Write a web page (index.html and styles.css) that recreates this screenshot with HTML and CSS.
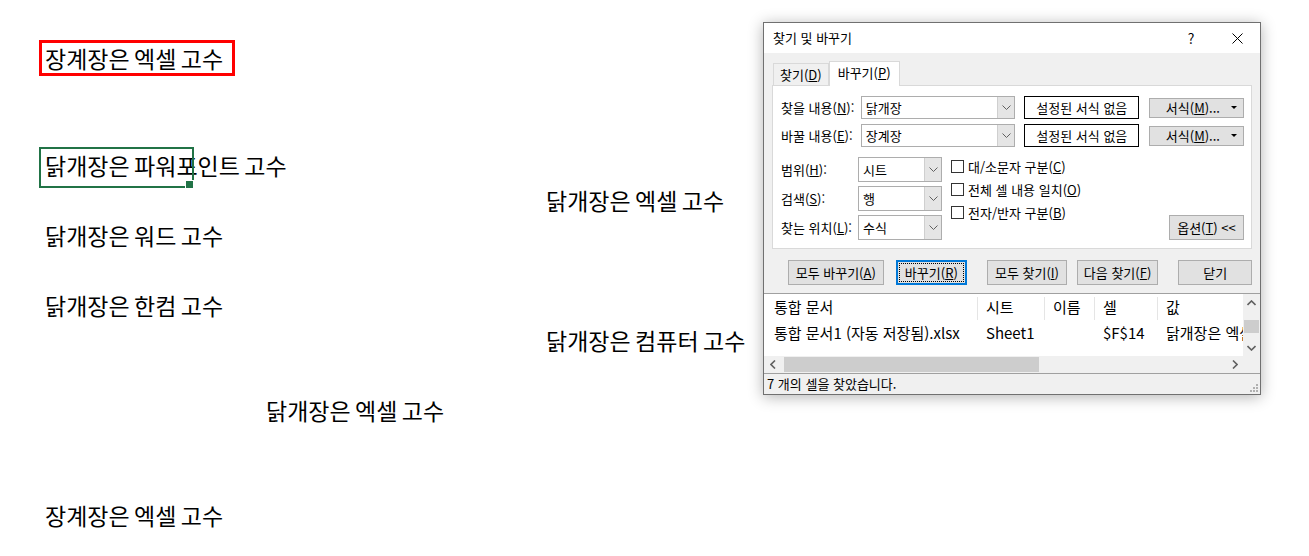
FILE: index.html
```html
<!DOCTYPE html>
<html lang="ko">
<head>
    <meta charset="UTF-8">
    <title>찾기 및 바꾸기</title>
    <link rel="stylesheet" href="styles.css">
</head>
<body>

    <div class="sheet">
        <div class="cell ca r1 cell-boxed"><div class="shape-box">장계장은 엑셀 고수</div></div>
        <div class="cell ca r4 selected">닭개장은 파워포인트 고수</div>
        <div class="cell ce r5">닭개장은 엑셀 고수</div>
        <div class="cell ca r6">닭개장은 워드 고수</div>
        <div class="cell ca r8">닭개장은 한컴 고수</div>
        <div class="cell ce r9">닭개장은 컴퓨터 고수</div>
        <div class="cell cc r11">닭개장은 엑셀 고수</div>
        <div class="cell ca r14">장계장은 엑셀 고수</div>
    </div>

    <div class="dialog">
        <div class="titlebar">
            <span class="title">찾기 및 바꾸기</span>
            <span class="title-btn help">?</span>
            <span class="title-btn">
                <svg width="11" height="11" viewBox="0 0 11 11"><path d="M0.5 0.5L10.5 10.5M10.5 0.5L0.5 10.5" stroke="#000" stroke-width="1" fill="none"/></svg>
            </span>
        </div>

        <div class="dlg-body">
            <div class="tabs">
                <div class="tab"><span>찾기(<u>D</u>)</span></div>
                <div class="tab active"><span>바꾸기(<u>P</u>)</span></div>
            </div>

            <div class="panel">
                <div class="field-row">
                    <label class="field-label">찾을 내용(<u>N</u>):</label>
                    <div class="combo wide">
                        <span class="combo-text">닭개장</span>
                        <span class="combo-btn"><svg width="9" height="5" viewBox="0 0 9 5"><path d="M0.5 0.5L4.5 4.5L8.5 0.5" stroke="#606060" fill="none"/></svg></span>
                    </div>
                    <div class="fmt-preview">설정된 서식 없음</div>
                    <button class="btn fmt-btn"><span>서식(<u>M</u>)...</span><span class="caret"></span></button>
                </div>
                <div class="field-row">
                    <label class="field-label">바꿀 내용(<u>E</u>):</label>
                    <div class="combo wide">
                        <span class="combo-text">장계장</span>
                        <span class="combo-btn"><svg width="9" height="5" viewBox="0 0 9 5"><path d="M0.5 0.5L4.5 4.5L8.5 0.5" stroke="#606060" fill="none"/></svg></span>
                    </div>
                    <div class="fmt-preview">설정된 서식 없음</div>
                    <button class="btn fmt-btn"><span>서식(<u>M</u>)...</span><span class="caret"></span></button>
                </div>

                <div class="options">
                    <div class="opt-fields">
                        <div class="opt-row">
                            <label class="opt-label">범위(<u>H</u>):</label>
                            <div class="combo narrow">
                                <span class="combo-text">시트</span>
                                <span class="combo-btn"><svg width="9" height="5" viewBox="0 0 9 5"><path d="M0.5 0.5L4.5 4.5L8.5 0.5" stroke="#606060" fill="none"/></svg></span>
                            </div>
                        </div>
                        <div class="opt-row">
                            <label class="opt-label">검색(<u>S</u>):</label>
                            <div class="combo narrow">
                                <span class="combo-text">행</span>
                                <span class="combo-btn"><svg width="9" height="5" viewBox="0 0 9 5"><path d="M0.5 0.5L4.5 4.5L8.5 0.5" stroke="#606060" fill="none"/></svg></span>
                            </div>
                        </div>
                        <div class="opt-row">
                            <label class="opt-label">찾는 위치(<u>L</u>):</label>
                            <div class="combo narrow">
                                <span class="combo-text">수식</span>
                                <span class="combo-btn"><svg width="9" height="5" viewBox="0 0 9 5"><path d="M0.5 0.5L4.5 4.5L8.5 0.5" stroke="#606060" fill="none"/></svg></span>
                            </div>
                        </div>
                    </div>

                    <div class="checks">
                        <label class="check"><span class="box"></span><span>대/소문자 구분(<u>C</u>)</span></label>
                        <label class="check"><span class="box"></span><span>전체 셀 내용 일치(<u>O</u>)</span></label>
                        <label class="check"><span class="box"></span><span>전자/반자 구분(<u>B</u>)</span></label>
                    </div>

                    <button class="btn options-btn">옵션(<u>T</u>) &lt;&lt;</button>
                </div>
            </div>

            <div class="actions">
                <button class="btn b-all">모두 바꾸기(<u>A</u>)</button>
                <button class="btn b-replace focused">바꾸기(<u>R</u>)</button>
                <button class="btn b-findall">모두 찾기(<u>I</u>)</button>
                <button class="btn b-next">다음 찾기(<u>F</u>)</button>
                <button class="btn b-close">닫기</button>
            </div>
        </div>

        <div class="results">
            <div class="list">
                <div class="table">
                    <div class="th">통합 문서</div>
                    <div class="th sep">시트</div>
                    <div class="th sep">이름</div>
                    <div class="th sep">셀</div>
                    <div class="th sep">값</div>
                    <div class="td">통합 문서1 (자동 저장됨).xlsx</div>
                    <div class="td">Sheet1</div>
                    <div class="td"></div>
                    <div class="td">$F$14</div>
                    <div class="td">닭개장은 엑셀 고수</div>
                </div>
                <div class="vscroll">
                    <span class="arrow"><svg width="9" height="6" viewBox="0 0 9 6"><path d="M0.5 5L4.5 1L8.5 5" stroke="#606060" stroke-width="1.6" fill="none"/></svg></span>
                    <span class="vthumb"></span>
                    <span class="arrow"><svg width="9" height="6" viewBox="0 0 9 6"><path d="M0.5 1L4.5 5L8.5 1" stroke="#606060" stroke-width="1.6" fill="none"/></svg></span>
                </div>
            </div>
            <div class="hscroll">
                <div class="htrack">
                    <span class="arrow"><svg width="6" height="9" viewBox="0 0 6 9"><path d="M5 0.5L1 4.5L5 8.5" stroke="#606060" stroke-width="1.6" fill="none"/></svg></span>
                    <span class="hthumb"></span>
                    <span class="arrow right"><svg width="6" height="9" viewBox="0 0 6 9"><path d="M1 0.5L5 4.5L1 8.5" stroke="#606060" stroke-width="1.6" fill="none"/></svg></span>
                </div>
                <div class="corner"></div>
            </div>
            <div class="status">
                <span>7 개의 셀을 찾았습니다.</span>
                <svg class="grip" width="9" height="9" viewBox="0 0 9 9" fill="#b0b0b0">
                    <rect x="7" y="1" width="2" height="2"/>
                    <rect x="4" y="4" width="2" height="2"/><rect x="7" y="4" width="2" height="2"/>
                    <rect x="1" y="7" width="2" height="2"/><rect x="4" y="7" width="2" height="2"/><rect x="7" y="7" width="2" height="2"/>
                </svg>
            </div>
        </div>
    </div>

</body>
</html>
```

FILE: styles.css
```css
* {
    margin: 0;
    padding: 0;
    box-sizing: border-box;
}

body {
    font-family: "Noto Sans CJK KR", "Noto Sans", sans-serif;
    background: #fff;
    color: #000;
    width: 1309px;
    height: 556px;
    overflow: hidden;
    position: relative;
}

/* spreadsheet area */
.sheet {
    display: grid;
    grid-template-columns: 221px 280px 1fr;
    grid-template-rows: 36px 36px 36px repeat(11, 35px);
    padding: 40px 0 0 39px;
    font-size: 23px;
    word-spacing: -2px;
}

.cell {
    display: flex;
    align-items: center;
    padding-left: 6px;
    white-space: nowrap;
    line-height: 1;
}

.ca { grid-column: 1; }
.cc { grid-column: 2; }
.ce { grid-column: 3; }

.r1 { grid-row: 1; }
.r4 { grid-row: 4; }
.r5 { grid-row: 5; }
.r6 { grid-row: 6; }
.r8 { grid-row: 8; }
.r9 { grid-row: 9; }
.r11 { grid-row: 11; }
.r14 { grid-row: 14; }

.cell-boxed {
    padding-left: 0;
}

.shape-box {
    display: flex;
    align-items: center;
    width: 196px;
    height: 100%;
    border: 3px solid #ff0000;
    padding-left: 3px;
}

.selected {
    position: relative;
}

.selected::before {
    content: "";
    position: absolute;
    left: 0;
    top: -1px;
    width: 151px;
    height: 37px;
    border: 2px solid #217346;
}

.selected::after {
    content: "";
    position: absolute;
    left: 146px;
    top: 32px;
    width: 7px;
    height: 7px;
    background: #217346;
    border: 1px solid #fff;
}

/* find & replace dialog */
.dialog {
    position: absolute;
    left: 763px;
    top: 22px;
    width: 498px;
    border: 1px solid #707070;
    background: #f0f0f0;
    box-shadow: 0 2px 14px rgba(0, 0, 0, 0.3);
    font-size: 13px;
    line-height: 1.2;
    display: flex;
    flex-direction: column;
}

.titlebar {
    display: flex;
    align-items: center;
    height: 30px;
    background: #fff;
    padding-left: 9px;
}

.title {
    flex: 1;
}

.title-btn {
    width: 46px;
    height: 30px;
    display: flex;
    align-items: center;
    justify-content: center;
}

.help {
    font-size: 14px;
}

.dlg-body {
    padding: 8px 8px 8px 8px;
}

.tabs {
    display: flex;
    align-items: flex-end;
    height: 24px;
    padding-left: 1px;
    position: relative;
    z-index: 1;
}

.tab {
    height: 22px;
    padding: 0 6px;
    display: flex;
    align-items: center;
    border: 1px solid #d9d9d9;
    border-bottom: none;
    background: #f0f0f0;
}

.tab.active {
    height: 25px;
    padding: 0 8px 2px;
    margin-bottom: -1px;
    background: #fff;
}

.panel {
    background: #fff;
    border: 1px solid #d9d9d9;
    padding: 10px 7px 8px 8px;
}

.field-row {
    display: flex;
    align-items: center;
    height: 23px;
}

.field-row + .field-row {
    margin-top: 5px;
}

.field-label {
    width: 80px;
    white-space: nowrap;
}

.combo {
    display: flex;
    height: 100%;
    border: 1px solid #adadad;
    background: #fff;
}

.combo.wide {
    width: 155px;
}

.combo.narrow {
    width: 84px;
}

.combo-text {
    flex: 1;
    display: flex;
    align-items: center;
    padding-left: 4px;
}

.combo-btn {
    width: 17px;
    display: flex;
    align-items: center;
    justify-content: center;
    background: #e5e5e5;
    border-left: 1px solid #cfcfcf;
}

.fmt-preview {
    width: 115px;
    height: 100%;
    margin-left: 9px;
    border: 1px solid #000;
    display: flex;
    align-items: center;
    justify-content: center;
}

.btn {
    font: inherit;
    color: #000;
    background: #e1e1e1;
    border: 1px solid #adadad;
    display: flex;
    align-items: center;
    justify-content: center;
    white-space: nowrap;
}

.fmt-btn {
    width: 95px;
    height: 20px;
    margin-left: 10px;
    justify-content: flex-end;
    padding-right: 6px;
    gap: 11px;
}

.caret {
    width: 0;
    height: 0;
    border-left: 3px solid transparent;
    border-right: 3px solid transparent;
    border-top: 3px solid #000;
}

.options {
    display: flex;
    margin-top: 10px;
}

.opt-fields {
    display: flex;
    flex-direction: column;
    gap: 4px;
}

.opt-row {
    display: flex;
    align-items: center;
    height: 25px;
}

.opt-label {
    width: 77px;
    white-space: nowrap;
}

.checks {
    margin: -2px 0 0 9px;
    display: flex;
    flex-direction: column;
}

.check {
    display: flex;
    align-items: center;
    height: 23px;
    gap: 4px;
}

.box {
    width: 13px;
    height: 13px;
    border: 1px solid #333;
    background: #fff;
}

.options-btn {
    margin-left: auto;
    align-self: flex-end;
    width: 75px;
    height: 25px;
}

.actions {
    display: flex;
    margin-top: 11px;
    height: 25px;
}

.actions .btn {
    height: 25px;
}

.b-all { width: 96px; margin-left: 16px; }
.b-replace { width: 72px; margin-left: 12px; }
.b-findall { width: 80px; margin-left: 20px; }
.b-next { width: 82px; margin-left: 10px; }
.b-close { width: 74px; margin-left: 20px; }

.focused {
    border: 2px solid #0078d7;
    position: relative;
}

.focused::after {
    content: "";
    position: absolute;
    inset: 1px;
    border: 1px dotted #000;
}

/* results list */
.results {
    background: #fff;
    border-top: 1px solid #a0a0a0;
    font-size: 15px;
}

.list {
    display: flex;
    height: 62px;
}

.table {
    flex: 1;
    overflow: hidden;
    display: grid;
    grid-template-columns: 213px 67px 50px 63px 200px;
    grid-template-rows: 26px 26px;
    white-space: nowrap;
}

.th, .td {
    display: flex;
    align-items: center;
    padding-left: 8px;
}

.th:first-child, .td:nth-child(6) {
    padding-left: 10px;
}

.th.sep {
    border-left: 1px solid #e5e5e5;
    margin: 3px 0 0;
    padding-bottom: 3px;
}

.td:nth-child(7), .td:nth-child(8), .td:nth-child(9), .td:nth-child(10) {
    padding-left: 9px;
}

.vscroll {
    width: 17px;
    background: #f0f0f0;
    display: flex;
    flex-direction: column;
    align-items: center;
}

.arrow {
    width: 17px;
    height: 17px;
    display: flex;
    align-items: center;
    justify-content: center;
}

.vthumb {
    width: 15px;
    height: 13px;
    margin: 9px 0 auto;
    background: #cdcdcd;
}

.hscroll {
    display: flex;
    height: 17px;
}

.htrack {
    flex: 1;
    display: flex;
    align-items: center;
    background: #f0f0f0;
}

.hthumb {
    width: 255px;
    height: 15px;
    margin-left: 3px;
    background: #cdcdcd;
}

.arrow.right {
    margin-left: auto;
}

.corner {
    width: 17px;
    background: #f0f0f0;
}

.status {
    display: flex;
    align-items: center;
    justify-content: space-between;
    height: 21px;
    padding: 0 2px 0 3px;
    border-top: 1px solid #a0a0a0;
    background: #f0f0f0;
    font-size: 13px;
}

.grip {
    align-self: flex-end;
    margin-bottom: 2px;
}
```
